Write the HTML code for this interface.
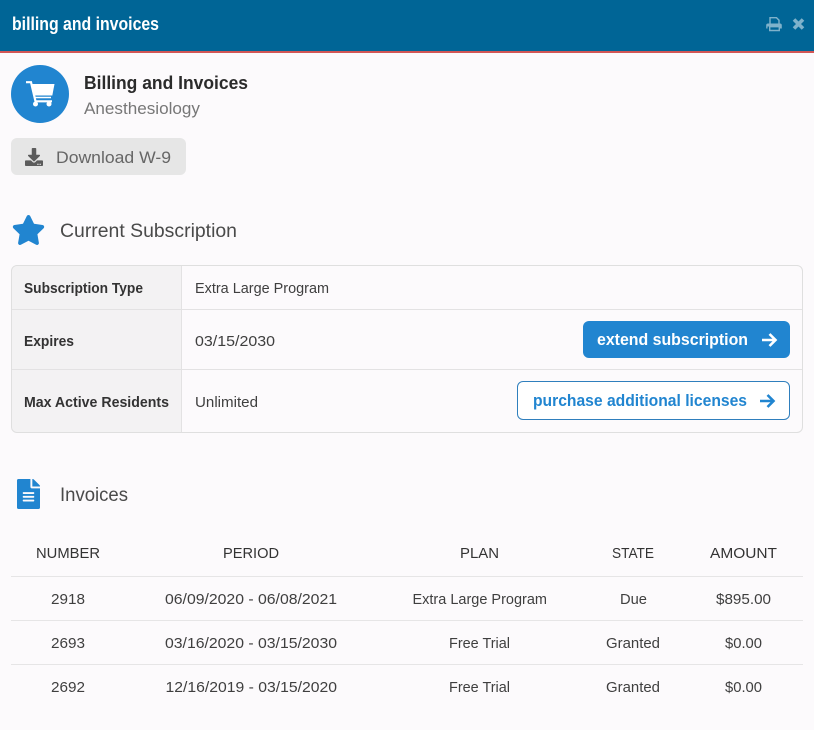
<!DOCTYPE html>
<html lang="en"><head><meta charset="utf-8"><title>billing and invoices</title>
<style>
html,body{margin:0;padding:0;width:814px;height:730px;overflow:hidden;background:#fcfafc}
svg{display:block}
text{font-family:"Liberation Sans",sans-serif;font-size:15px;fill:#3f3f3f}
.b{font-weight:bold}
.t{fill:#333}
</style></head><body>
<svg xmlns="http://www.w3.org/2000/svg" width="814" height="730" viewBox="0 0 814 730">
<rect width="814" height="730" fill="#fcfafc"/>
<rect width="814" height="51" fill="#006596"/>
<rect y="51" width="814" height="2" fill="#d25656"/>
<text x="12" y="30" class="b" style="font-size:18px;fill:#fff" textLength="147" lengthAdjust="spacingAndGlyphs">billing and invoices</text>
<path fill="#7fb2cb" d="M769 23.500h11q1.800 0 1.800 1.800v3.200h-2.300v-2h-12v2h-1.300v-3.200q0-1.800 1.800-1.800z"/>
<path fill="none" stroke="#7fb2cb" stroke-width="1.400" d="M770 23.500v-5.800h6.500l2.500 2.500v3.300M769.700 26.700h9.600v3.800h-9.600z"/>
<path d="M794 19.500l9 9M803 19.500l-9 9" stroke="#7fb2cb" stroke-width="3.600" fill="none"/>
<circle cx="40" cy="94" r="29" fill="#2185d0"/>
<path fill="#fff" d="M31 84H54.500L52.300 95.500H33.300z"/>
<path fill="none" stroke="#fff" stroke-width="2.200" d="M26 82.200H31L35.500 101.300H52"/>
<path fill="none" stroke="#fff" stroke-width="1.600" d="M34 97.500H51"/>
<circle cx="35.500" cy="104" r="2.500" fill="#fff"/>
<circle cx="49" cy="104" r="2.500" fill="#fff"/>
<text x="84" y="89" class="t" style="font-size:18.500px;font-weight:bold;fill:#2b2b2b" textLength="164" lengthAdjust="spacingAndGlyphs">Billing and Invoices</text>
<text x="84" y="114" style="font-size:17px;fill:#777" textLength="116" lengthAdjust="spacingAndGlyphs">Anesthesiology</text>
<rect x="11" y="138" width="175" height="37" rx="6" fill="#e6e6e6"/>
<svg x="25" y="148" width="18" height="18" viewBox="0 0 512 512"><path fill="#5c5c5c" d="M216 0h80c13.300 0 24 10.700 24 24v168h87.700c17.800 0 26.700 21.500 14.100 34.100L269.700 378.300c-7.500 7.500-19.800 7.500-27.300 0L90.100 226.100c-12.600-12.600-3.700-34.100 14.100-34.100H192V24c0-13.300 10.700-24 24-24zm296 376v112c0 13.300-10.700 24-24 24H24c-13.300 0-24-10.700-24-24V376c0-13.300 10.700-24 24-24h146.700l49 49c20.100 20.100 52.500 20.100 72.600 0l49-49H488c13.300 0 24 10.700 24 24zm-124 88c0-11-9-20-20-20s-20 9-20 20 9 20 20 20 20-9 20-20zm64 0c0-11-9-20-20-20s-20 9-20 20 9 20 20 20 20-9 20-20z"/></svg>
<text x="56" y="163" style="font-size:17px;fill:#666" textLength="115" lengthAdjust="spacingAndGlyphs">Download W-9</text>
<svg x="12" y="215" width="33" height="30" viewBox="14 0 548 512"><path fill="#2185d0" d="M259.300 17.800L194 150.200 47.900 171.500c-26.200 3.800-36.700 36.100-17.700 54.600l105.700 103-25 145.500c-4.500 26.300 23.200 46 46.400 33.700L288 439.600l130.700 68.700c23.200 12.200 50.900-7.400 46.400-33.700l-25-145.500 105.700-103c19-18.500 8.500-50.800-17.700-54.600L382 150.200 316.700 17.800c-11.700-23.600-45.600-23.900-57.400 0z"/></svg>
<text x="60" y="237" style="font-size:19px;fill:#4a4a4a" textLength="177" lengthAdjust="spacingAndGlyphs">Current Subscription</text>
<path d="M181.500 266H17a5 5 0 0 0-5 5V427a5 5 0 0 0 5 5H181.500z" fill="#f3f2f3"/>
<rect x="11.500" y="265.500" width="791" height="167" rx="5.500" fill="none" stroke="#dfdfdf"/>
<path d="M181.500 266V432M12 309.500H802M12 369.500H802" stroke="#e3e2e3" fill="none"/>
<text x="24" y="293" class="b" style="font-size:14.500px;fill:#333" textLength="119" lengthAdjust="spacingAndGlyphs">Subscription Type</text>
<text x="24" y="346" class="b" style="font-size:14.500px;fill:#333" textLength="50" lengthAdjust="spacingAndGlyphs">Expires</text>
<text x="24" y="407" class="b" style="font-size:14.500px;fill:#333" textLength="145" lengthAdjust="spacingAndGlyphs">Max Active Residents</text>
<text x="195" y="293" textLength="134" lengthAdjust="spacingAndGlyphs">Extra Large Program</text>
<text x="195" y="346" textLength="80" lengthAdjust="spacingAndGlyphs">03/15/2030</text>
<text x="195" y="407" textLength="63" lengthAdjust="spacingAndGlyphs">Unlimited</text>
<rect x="583" y="321" width="207" height="37" rx="6" fill="#2185d0"/>
<text x="597" y="345" class="b" style="font-size:16.500px;fill:#fff" textLength="151" lengthAdjust="spacingAndGlyphs">extend subscription</text>
<path d="M762 340H775M769.500 334l6 6-6 6" fill="none" stroke="#fff" stroke-width="2.600"/>
<rect x="517.500" y="381.500" width="272" height="38" rx="5.500" fill="#fff" stroke="#2f7fbd"/>
<text x="533" y="406" class="b" style="font-size:16.500px;fill:#2185d0" textLength="214" lengthAdjust="spacingAndGlyphs">purchase additional licenses</text>
<path d="M760 401H773M767.500 395l6 6-6 6" fill="none" stroke="#2185d0" stroke-width="2.600"/>
<svg x="17" y="479" width="23" height="30" viewBox="0 0 384 512" preserveAspectRatio="none"><path fill="#2185d0" d="M224 136V0H24C10.700 0 0 10.700 0 24v464c0 13.300 10.700 24 24 24h336c13.300 0 24-10.700 24-24V160H248c-13.200 0-24-10.800-24-24zm64 236c0 6.600-5.400 12-12 12H108c-6.600 0-12-5.400-12-12v-8c0-6.600 5.400-12 12-12h168c6.600 0 12 5.400 12 12v8zm0-64c0 6.600-5.400 12-12 12H108c-6.600 0-12-5.400-12-12v-8c0-6.600 5.400-12 12-12h168c6.600 0 12 5.400 12 12v8zm0-72v8c0 6.600-5.400 12-12 12H108c-6.600 0-12-5.400-12-12v-8c0-6.600 5.400-12 12-12h168c6.600 0 12 5.400 12 12zm96-114.100v6.100H256V0h6.100c6.400 0 12.500 2.500 17 7l97.900 98c4.500 4.500 7 10.600 7 16.900z"/></svg>
<text x="60" y="501" style="font-size:19px;fill:#4a4a4a" textLength="68" lengthAdjust="spacingAndGlyphs">Invoices</text>
<g>
<text x="36" y="558" style="fill:#333" textLength="64" lengthAdjust="spacingAndGlyphs">NUMBER</text>
<text x="223" y="558" style="fill:#333" textLength="56" lengthAdjust="spacingAndGlyphs">PERIOD</text>
<text x="460" y="558" style="fill:#333" textLength="39" lengthAdjust="spacingAndGlyphs">PLAN</text>
<text x="612" y="558" style="fill:#333" textLength="42" lengthAdjust="spacingAndGlyphs">STATE</text>
<text x="710" y="558" style="fill:#333" textLength="67" lengthAdjust="spacingAndGlyphs">AMOUNT</text>
</g>
<path d="M11 576.500H803M11 620.500H803M11 664.500H803" stroke="#e6e5e6" fill="none"/>
<text x="51" y="604" textLength="34" lengthAdjust="spacingAndGlyphs">2918</text>
<text x="165" y="604" textLength="172" lengthAdjust="spacingAndGlyphs">06/09/2020 - 06/08/2021</text>
<text x="412.500" y="604" textLength="134.500" lengthAdjust="spacingAndGlyphs">Extra Large Program</text>
<text x="620" y="604" textLength="27" lengthAdjust="spacingAndGlyphs">Due</text>
<text x="716" y="604" textLength="55" lengthAdjust="spacingAndGlyphs">$895.00</text>
<text x="51" y="648" textLength="34" lengthAdjust="spacingAndGlyphs">2693</text>
<text x="165" y="648" textLength="172" lengthAdjust="spacingAndGlyphs">03/16/2020 - 03/15/2030</text>
<text x="449" y="648" textLength="61" lengthAdjust="spacingAndGlyphs">Free Trial</text>
<text x="606" y="648" textLength="54" lengthAdjust="spacingAndGlyphs">Granted</text>
<text x="725" y="648" textLength="37" lengthAdjust="spacingAndGlyphs">$0.00</text>
<text x="51" y="692" textLength="34" lengthAdjust="spacingAndGlyphs">2692</text>
<text x="165.500" y="692" textLength="171.500" lengthAdjust="spacingAndGlyphs">12/16/2019 - 03/15/2020</text>
<text x="449" y="692" textLength="61" lengthAdjust="spacingAndGlyphs">Free Trial</text>
<text x="606" y="692" textLength="54" lengthAdjust="spacingAndGlyphs">Granted</text>
<text x="725" y="692" textLength="37" lengthAdjust="spacingAndGlyphs">$0.00</text>
</svg>
</body></html>
